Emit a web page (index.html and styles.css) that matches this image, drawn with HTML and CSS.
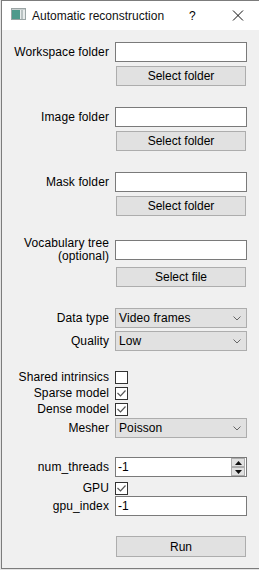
FILE: index.html
```html
<!DOCTYPE html>
<html lang="en">
<head>
    <meta charset="UTF-8">
    <title>Automatic reconstruction</title>
    <link rel="stylesheet" href="styles.css">
</head>
<body>
    <div class="window">
        <div class="titlebar">
            <svg class="app-icon" width="15" height="12" viewBox="0 0 15 12">
                <rect x="0.5" y="0.5" width="14" height="11" fill="#e8ecec" stroke="#9aa4a4"/>
                <rect x="1" y="2" width="8" height="9" fill="#4f9a8c"/>
                <rect x="10" y="2" width="2" height="9" fill="#b9c2c2"/>
                <rect x="1" y="1" width="13" height="1" fill="#c9d0d0"/>
            </svg>
            <span class="title">Automatic reconstruction</span>
            <span class="help">?</span>
            <svg class="close" width="12" height="11" viewBox="0 0 12 11">
                <path d="M1 0.5 L11 10.5 M11 0.5 L1 10.5" stroke="#111" stroke-width="1"/>
            </svg>
        </div>

        <div class="form">
            <div class="row first">
                <label>Workspace folder</label>
                <input type="text" class="field">
            </div>
            <div class="row">
                <span></span>
                <button class="btn">Select folder</button>
            </div>

            <div class="row gap">
                <label>Image folder</label>
                <input type="text" class="field">
            </div>
            <div class="row">
                <span></span>
                <button class="btn">Select folder</button>
            </div>

            <div class="row gap">
                <label>Mask folder</label>
                <input type="text" class="field">
            </div>
            <div class="row">
                <span></span>
                <button class="btn">Select folder</button>
            </div>

            <div class="row gap tall">
                <label>Vocabulary tree<br>(optional)</label>
                <input type="text" class="field">
            </div>
            <div class="row">
                <span></span>
                <button class="btn">Select file</button>
            </div>

            <div class="row gap">
                <label>Data type</label>
                <div class="combo">Video frames<svg width="8" height="5" viewBox="0 0 8 5"><path d="M0.5 0.5 L4 4 L7.5 0.5" fill="none" stroke="#666"/></svg></div>
            </div>
            <div class="row tight">
                <label>Quality</label>
                <div class="combo">Low<svg width="8" height="5" viewBox="0 0 8 5"><path d="M0.5 0.5 L4 4 L7.5 0.5" fill="none" stroke="#666"/></svg></div>
            </div>

            <div class="row check-row sep">
                <label>Shared intrinsics</label>
                <span class="check"></span>
            </div>
            <div class="row check-row tight">
                <label>Sparse model</label>
                <span class="check checked"><svg width="11" height="11" viewBox="0 0 11 11"><path d="M1.5 5 L4.5 8 L9.5 2.5" fill="none" stroke="#555" stroke-width="1.2"/></svg></span>
            </div>
            <div class="row check-row tight">
                <label>Dense model</label>
                <span class="check checked"><svg width="11" height="11" viewBox="0 0 11 11"><path d="M1.5 5 L4.5 8 L9.5 2.5" fill="none" stroke="#555" stroke-width="1.2"/></svg></span>
            </div>
            <div class="row tight">
                <label>Mesher</label>
                <div class="combo">Poisson<svg width="8" height="5" viewBox="0 0 8 5"><path d="M0.5 0.5 L4 4 L7.5 0.5" fill="none" stroke="#666"/></svg></div>
            </div>

            <div class="row sep">
                <label>num_threads</label>
                <div class="spin">
                    <span class="spin-value">-1</span>
                    <div class="spin-buttons">
                        <span class="spin-btn"><svg width="7" height="4" viewBox="0 0 7 4"><path d="M0 4 L3.5 0 L7 4 Z" fill="#111"/></svg></span>
                        <span class="spin-btn"><svg width="7" height="4" viewBox="0 0 7 4"><path d="M0 0 L3.5 4 L7 0 Z" fill="#111"/></svg></span>
                    </div>
                </div>
            </div>
            <div class="row check-row">
                <label>GPU</label>
                <span class="check checked"><svg width="11" height="11" viewBox="0 0 11 11"><path d="M1.5 5 L4.5 8 L9.5 2.5" fill="none" stroke="#555" stroke-width="1.2"/></svg></span>
            </div>
            <div class="row snug">
                <label>gpu_index</label>
                <input type="text" class="field" value="-1">
            </div>

            <div class="row run-row">
                <span></span>
                <button class="btn run">Run</button>
            </div>
        </div>
    </div>
</body>
</html>
```

FILE: styles.css
```css
html, body {
    margin: 0;
    padding: 0;
    height: 570px;
    overflow: hidden;
}

body {
    background-color: #e4e4e4;
    font-family: "Liberation Sans", Arial, sans-serif;
    font-size: 12px;
    letter-spacing: 0.1px;
    color: #000;
}

.window {
    margin-left: 1px;
    width: 258px;
    height: 567px;
    border: 1px solid #7c7c7c;
    border-right: none;
    background-color: #f0f0f0;
}

.titlebar {
    height: 29px;
    background-color: #fff;
    display: flex;
    align-items: center;
}

.titlebar .app-icon {
    margin-left: 9px;
    margin-top: -3px;
}

.titlebar .title {
    margin-left: 6px;
    font-size: 12px;
    letter-spacing: 0;
    color: #111;
}

.titlebar .help {
    margin-left: 25px;
    font-size: 12px;
}

.titlebar .close {
    margin-left: 36px;
}

.form {
    display: flex;
    flex-direction: column;
}

.row {
    display: grid;
    grid-template-columns: 107px 132px;
    column-gap: 6px;
    align-items: center;
    margin-top: 4px;
}

.row.first {
    margin-top: 12px;
}

.row.gap {
    margin-top: 21px;
}

.row.tight {
    margin-top: 3px;
}

.row.snug {
    margin-top: 2px;
}

.row.sep {
    margin-top: 19px;
}

.row.tall {
    height: 26px;
    margin-top: 21px;
}

.row.tall label {
    line-height: 13px;
}

.row.run-row {
    margin-top: 20px;
}

.row label {
    text-align: right;
    white-space: nowrap;
}

.field {
    box-sizing: border-box;
    height: 20px;
    width: 132px;
    margin: 0;
    padding: 0 2px;
    border: 1px solid #7a7a7a;
    background: #fff;
    font-family: inherit;
    font-size: 12px;
    outline: none;
}

.btn {
    box-sizing: border-box;
    height: 20px;
    width: 130px;
    margin: 0 0 0 1px;
    padding: 0;
    border: 1px solid #adadad;
    background-color: #e1e1e1;
    font-family: inherit;
    font-size: 12px;
    color: #000;
}

.btn.run {
    height: 21px;
}

.combo {
    box-sizing: border-box;
    height: 20px;
    width: 132px;
    border: 1px solid #adadad;
    background-color: #e1e1e1;
    display: flex;
    align-items: center;
    justify-content: space-between;
    padding: 0 5px 0 3px;
}

.check-row {
    height: 13px;
}

.check {
    box-sizing: border-box;
    width: 13px;
    height: 13px;
    border: 1px solid #333;
    background: #fff;
    display: flex;
    align-items: center;
    justify-content: center;
}

.spin {
    box-sizing: border-box;
    height: 20px;
    width: 132px;
    border: 1px solid #7a7a7a;
    background: #fff;
    display: flex;
    align-items: center;
    justify-content: space-between;
    padding: 0 1px 0 2px;
}

.spin-buttons {
    display: flex;
    flex-direction: column;
}

.spin-btn {
    box-sizing: border-box;
    width: 14px;
    height: 9px;
    background-color: #e1e1e1;
    border: 1px solid #adadad;
    display: flex;
    align-items: center;
    justify-content: center;
}
```
